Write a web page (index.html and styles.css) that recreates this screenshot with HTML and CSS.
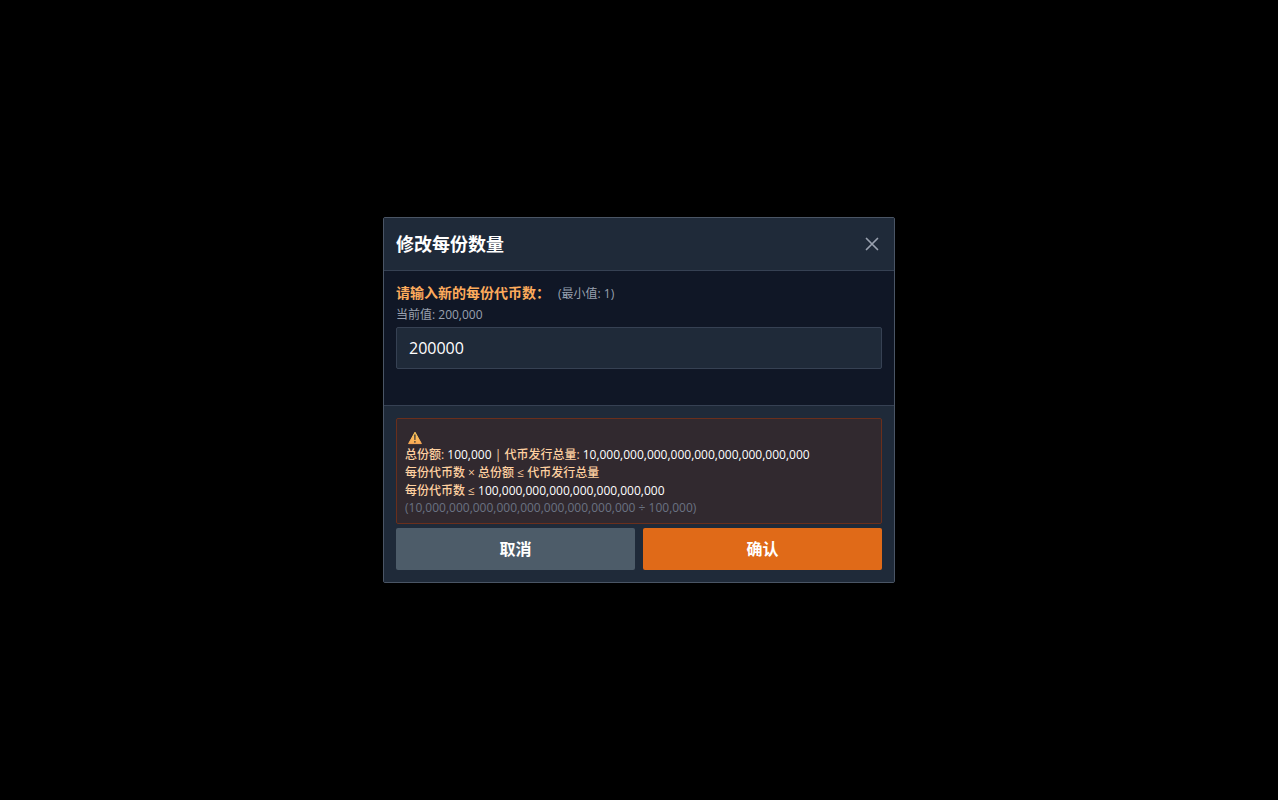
FILE: index.html
```
<!DOCTYPE html>
<html lang="zh-CN">
<head>
    <meta charset="UTF-8">
    <meta name="viewport" content="width=device-width, initial-scale=1.0">
    <title>修改每份数量</title>
    <link rel="stylesheet" href="styles.css">
</head>
<body>
    <div class="modal" role="dialog" aria-labelledby="modal-title">
        <header class="modal-header">
            <h1 id="modal-title">修改每份数量</h1>
            <button type="button" class="close" aria-label="关闭">
                <svg viewBox="0 0 20 20" width="20" height="20">
                    <path d="M4.5 4.5l11 11M15.5 4.5l-11 11" fill="none" stroke="currentColor" stroke-width="1.7" stroke-linecap="round"/>
                </svg>
            </button>
        </header>

        <div class="modal-body">
            <div class="label-row">
                <label for="amount">请输入新的每份代币数：</label>
                <span class="hint">(最小值: 1)</span>
            </div>
            <p class="current">当前值: 200,000</p>
            <input type="text" id="amount" inputmode="numeric" value="200000">
        </div>

        <footer class="modal-footer">
            <div class="warning">
                <svg class="warning-icon" viewBox="0 0 20 19" width="20" height="19">
                    <defs>
                        <linearGradient id="amber" x1="0" y1="0" x2="0" y2="1">
                            <stop offset="0" stop-color="#fcc95c"/>
                            <stop offset="1" stop-color="#fbaa55"/>
                        </linearGradient>
                    </defs>
                    <path d="M10 5.2L16.4 16.6H3.6Z" fill="url(#amber)" stroke="url(#amber)" stroke-width="1" stroke-linejoin="round"/>
                    <path d="M9.1 7.6h1.6l-.2 5.4h-1.2z" fill="#4a4038"/>
                    <circle cx="9.9" cy="14.8" r=".9" fill="#4a4038"/>
                </svg>
                <p>总份额: <span class="value">100,000</span> | 代币发行总量: <span class="value">10,000,000,000,000,000,000,000,000,000</span></p>
                <p>每份代币数 × 总份额 ≤ 代币发行总量</p>
                <p>每份代币数 ≤ <span class="value">100,000,000,000,000,000,000,000</span></p>
                <p class="formula">(10,000,000,000,000,000,000,000,000,000 ÷ 100,000)</p>
            </div>
            <div class="actions">
                <button type="button" class="cancel">取消</button>
                <button type="button" class="confirm">确认</button>
            </div>
        </footer>
    </div>
</body>
</html>
```

FILE: styles.css
```
* {
    box-sizing: border-box;
}

body {
    display: flex;
    align-items: center;
    justify-content: center;
    min-height: 100vh;
    margin: 0;
    background-color: #000;
    color: #fff;
    font-family: "Open Sans", "Noto Sans CJK SC", sans-serif;
}

h1, p {
    margin: 0;
}

button, input {
    font-family: inherit;
    color: inherit;
}

.modal {
    width: 100%;
    max-width: 512px;
    background-color: #101726;
    border: 1px solid #4a5565;
    border-radius: 2px;
}

.modal-header {
    display: flex;
    align-items: center;
    justify-content: space-between;
    padding: 12px;
    background-color: #1f2a39;
    border-bottom: 1px solid #364153;
}

h1 {
    font-size: 18px;
    line-height: 28px;
    font-weight: 700;
}

.close {
    display: flex;
    padding: 0;
    border: none;
    background: none;
    color: #99a1af;
    cursor: pointer;
}

.modal-body {
    padding: 12px 12px 36px;
}

.label-row {
    display: flex;
    align-items: baseline;
    gap: 8px;
    margin-bottom: 4px;
}

label {
    font-size: 14px;
    line-height: 20px;
    font-weight: 700;
    color: #fdab5c;
}

.hint, .current {
    font-size: 12px;
    line-height: 16px;
    color: #99a1af;
}

.current {
    margin-bottom: 4px;
}

input {
    display: block;
    width: 100%;
    padding: 8px 12px;
    font-size: 16px;
    line-height: 24px;
    background-color: #1f2a39;
    border: 1px solid #364153;
    border-radius: 2px;
}

.modal-footer {
    padding: 12px;
    background-color: #1f2a39;
    border-top: 1px solid #364153;
}

.warning {
    padding: 8px;
    margin-bottom: 4px;
    background-color: #31292f;
    border: 1px solid #6a2f1c;
    border-radius: 2px;
    font-size: 12px;
    line-height: 18px;
    font-weight: 500;
    color: #fed0a0;
}

.warning-icon {
    display: block;
}

.value {
    color: #fff;
}

.formula {
    line-height: 15px;
    font-weight: 400;
    color: #6a7282;
}

.actions {
    display: flex;
    gap: 8px;
}

.actions button {
    flex: 1;
    padding: 9px;
    border: none;
    border-radius: 2px;
    font-size: 16px;
    line-height: 24px;
    font-weight: 700;
    cursor: pointer;
}

.cancel {
    background-color: #4d5c69;
}

.confirm {
    background-color: #e06a18;
}
```
